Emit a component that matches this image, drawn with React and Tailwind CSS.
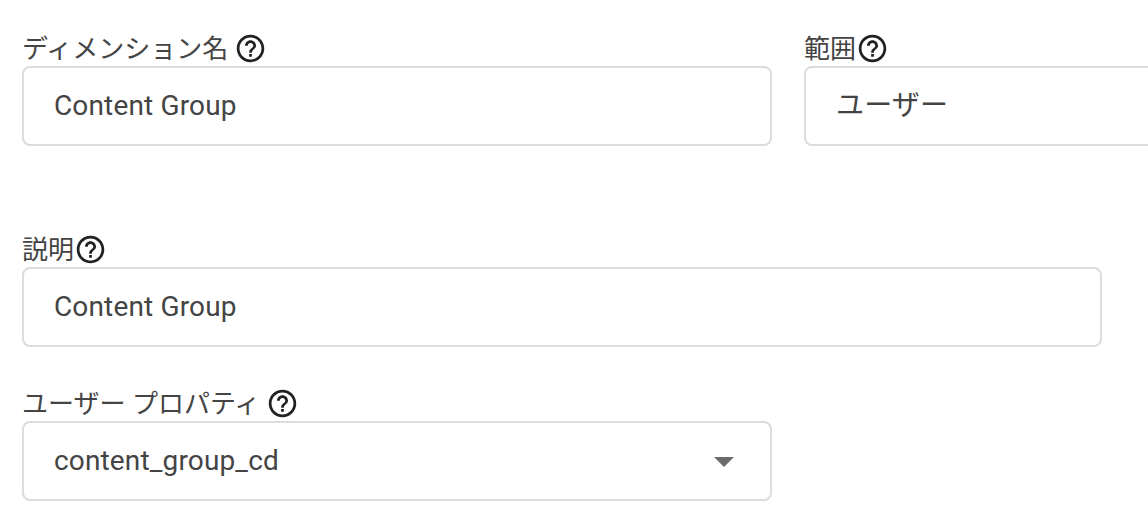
import React from "react";
import { MdHelpOutline } from "react-icons/md";

const font = { fontFamily: '"Roboto", "Noto Sans CJK JP", sans-serif' };

function Label({ text, gap }) {
  return (
    <div className={`flex items-center h-[32px] text-[26px] leading-[32px] text-[#444444] ${gap}`}>
      <span className="pt-[2px]">{text}</span>
      <MdHelpOutline className="text-[33px] text-[#202124] shrink-0" />
    </div>
  );
}

function Box({ value, width, select }) {
  return (
    <div className={`flex items-center justify-between h-[80px] pl-[30px] pr-[36px] border-2 border-[#dadce0] rounded-[8px] bg-white text-[28px] tracking-[0.15px] text-[#444444] shrink-0 ${width}`}>
      <span>{value}</span>
      {select && (
        <svg width="20" height="10" viewBox="0 0 20 10" className="text-[#6b6b6b] mt-[1px]">
          <path d="M0 0h20L10 10z" fill="currentColor" />
        </svg>
      )}
    </div>
  );
}

export default function App() {
  return (
    <div className="w-[1148px] h-[530px] overflow-hidden bg-white pl-[22px] pt-[32px]" style={font}>
      {/* Name and scope */}
      <div className="flex gap-[32px]">
        <div className="shrink-0">
          <Label text="ディメンション名" gap="gap-[6px]" />
          <div className="mt-[2px]">
            <Box value="Content Group" width="w-[750px]" />
          </div>
        </div>
        <div className="shrink-0">
          <Label text="範囲" gap="gap-0" />
          <div className="mt-[2px]">
            <Box value="ユーザー" width="w-[400px]" />
          </div>
        </div>
      </div>

      {/* Description */}
      <div className="mt-[87px]">
        <Label text="説明" gap="gap-0" />
        <div className="mt-[2px]">
          <Box value="Content Group" width="w-[1080px]" />
        </div>
      </div>

      {/* User property */}
      <div className="mt-[40px]">
        <Label text="ユーザー プロパティ" gap="gap-[6px]" />
        <div className="mt-[2px]">
          <Box value="content_group_cd" width="w-[750px]" select />
        </div>
      </div>
    </div>
  );
}
